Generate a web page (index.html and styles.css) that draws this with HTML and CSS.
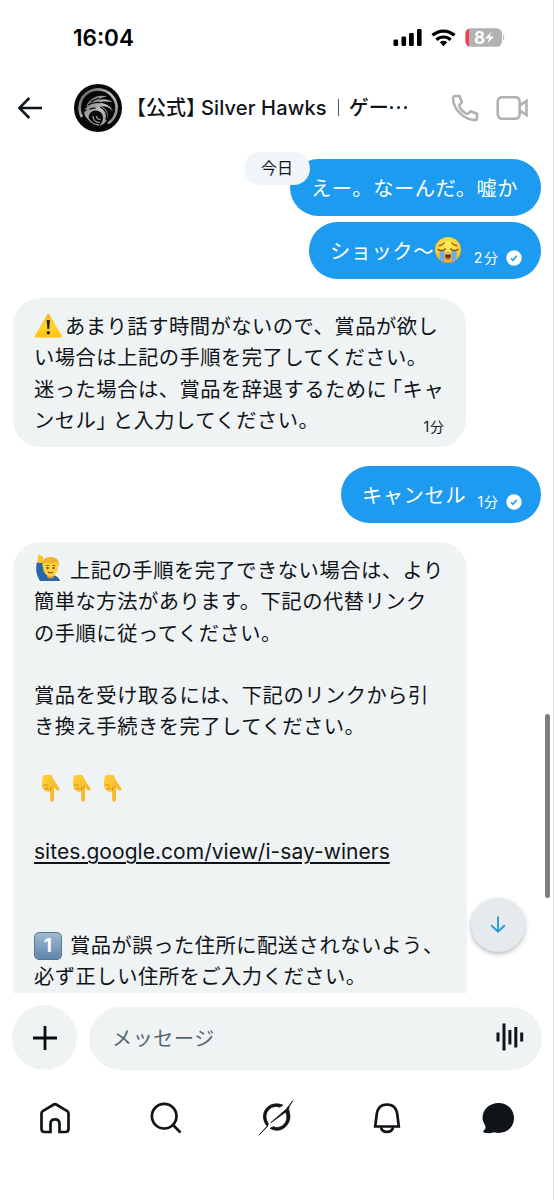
FILE: index.html
```html
<!DOCTYPE html>
<html lang="ja">
<head>
<meta charset="utf-8">
<title>メッセージ</title>
<link rel="stylesheet" href="styles.css">
</head>
<body>
<div class="screen">
  <div class="status">
    <span class="clock">16:04</span>
    <svg class="status-icons" width="114" height="22" viewBox="0 0 114 22">
      <g fill="#000"><rect x="0.5" y="12.5" width="4.6" height="6.5" rx="1.3"/><rect x="8.5" y="9.5" width="4.6" height="9.5" rx="1.3"/><rect x="16" y="6" width="4.8" height="13" rx="1.3"/><rect x="24" y="2" width="4.6" height="17" rx="1.3"/></g>
      <g fill="none" stroke="#000" stroke-width="3.2"><path d="M39.5 8.3a16.3 16.3 0 0 1 22 0"/><path d="M43.4 12.8a10.4 10.4 0 0 1 14.2 0"/></g>
      <path d="M50.5 19.2l-3.7-3.9a5.4 5.4 0 0 1 7.4 0z" fill="#000"/>
      <clipPath id="cell"><rect x="72.500" y="1.200" width="36.500" height="18.600" rx="5.500"/></clipPath>
      <g clip-path="url(#cell)"><rect x="72" y="0" width="38" height="22" fill="#b2b2b2"/><rect x="72" y="0" width="4" height="22" fill="#fa3a4c"/></g>
      <path d="M110.200 7.500q2.300 3 0 6z" fill="#aaa"/>
      <text x="81" y="16.800" class="battery-text">8</text>
      <path d="M98.500 4.500l-6.500 7h4.300l-2 5 6.800-7h-4.300z" fill="#fff"/>
    </svg>
  </div>

  <header class="header">
    <svg class="back" width="26" height="24" viewBox="0 0 26 24" fill="none" stroke="#0f1419" stroke-width="2.500"><path d="M25 12H2.500M12.300 2L2.400 12l9.900 10"/></svg>
    <svg class="avatar" width="48" height="48" viewBox="0 0 48 48">
      <defs><linearGradient id="silver" x1="0" y1="0" x2="1" y2="1"><stop offset="0" stop-color="#555"/><stop offset=".5" stop-color="#c0c0c0"/><stop offset="1" stop-color="#888"/></linearGradient></defs>
      <circle cx="24" cy="24" r="24" fill="#080808"/>
      <path d="M8 33A18.500 18.500 0 1 1 34 39.500" fill="none" stroke="url(#silver)" stroke-width="2.600"/>
      <path d="M12.500 22C15 15 23 10 33 12.500c-4 .2-7 1.700-9 3.500 5-1.500 10-1 14 2-5-1-10-.8-13 .7 7 .3 12 3.500 14 8.300-4-4-8-5-12-5 6 3 8 8 6 13-1.500 4-4 6-8 7 4-4 5-8 3-12-2-3.500-7-4.500-10.500-2-2.500 1.500-3.500 4-2.500 8-3-2-5-5-5-8l3-2-2.500-1 3-2z" fill="url(#silver)"/>
      <path d="M14 21c4-3 8-3 12-2.500M17 17.500l8-3.500M26 23c5 2 8 7 6 13M15.500 25.500q3-1.500 6-1.300" fill="none" stroke="#070707" stroke-width="1.300"/>
      <path d="M14 34c2 4 6 6.500 11 6.800M19 32c0 4 3 6.500 7 6.500M22.500 32c0 2.500 2 3.500 4 3.500" stroke="#aaa" stroke-width="1.200" fill="none"/>
    </svg>
    <h1 class="title"><span class="t-open">【</span><span>公式</span><span class="t-close">】</span><span class="t-name">Silver Hawks</span><i class="divider"></i><span class="t-game">ゲー</span><span class="dots"><b></b><b></b><b></b></span></h1>
    <div class="calls">
      <svg width="28" height="28" viewBox="0 0 28 28" fill="none" stroke="#b0b1b2" stroke-width="2.600" stroke-linejoin="round"><path d="M4 2h4.500l2.400 6.300-2.200 2.200q-1 1.200-.2 2.700c1.700 3 3.700 4.900 6.600 6.400q1.500.7 2.600-.4l1.800-1.900 6.500 2.500v4.200q-.2 2-2.200 2C12.500 25.500 2.500 15.500 2 4.200Q2 2 4 2z"/></svg>
      <svg width="33" height="24" viewBox="0 0 33 24" fill="none" stroke="#b0b1b2" stroke-width="2.600" stroke-linejoin="miter"><rect x="1.700" y="1.200" width="22" height="21.600" rx="4.500"/><path d="M24 9.300l6.500-4.300v14L24 14.700"/></svg>
    </div>
  </header>

  <main class="chat">
    <div class="day">今日</div>
    <div class="bubble out first">えー。なーんだ。嘘か</div>
    <div class="bubble out second"><span>ショック〜</span>
      <svg class="cry" width="28" height="28" viewBox="0 0 28 28">
        <defs><radialGradient id="face" cx=".5" cy=".35" r=".7"><stop offset="0" stop-color="#fff05a"/><stop offset=".7" stop-color="#fdc72e"/><stop offset="1" stop-color="#e89217"/></radialGradient></defs>
        <circle cx="14" cy="14" r="13" fill="url(#face)"/>
        <path d="M5.500 15h5v10.500c-2-.5-4-1.700-5-3zM17.500 15h5v7.500c-1 1.300-3 2.500-5 3z" fill="#6aaee6"/>
        <path d="M4 13.500q4 2.500 7.500-.5M16.500 13q3.500 3 7.500.5M5.500 9.500q3 0 4.500-2.500M22.500 9.500q-3 0-4.500-2.500" fill="none" stroke="#7b4710" stroke-width="1.300" stroke-linecap="round"/>
        <ellipse cx="14" cy="20" rx="2.800" ry="3.500" fill="#6b2b0b"/><path d="M12 21.500h4q-.5 2-2 2t-2-2" fill="#ed5b55"/><path d="M12.300 17.800h3.400" stroke="#fff" stroke-width="1.200"/>
      </svg>
      <span class="time">2<span class="gap"></span>分</span>
      <svg class="check" width="16" height="16" viewBox="0 0 16 16"><circle cx="8" cy="8" r="7.700" fill="#fff"/><path d="M5 8.200l2 2 3.700-4.500" fill="none" stroke="#1d9bf0" stroke-width="1.600"/></svg>
    </div>
    <div class="bubble in warning">
      <p><svg class="emoji tight" width="30" height="28" viewBox="0 0 30 28"><defs><linearGradient id="amber" x1="0" y1="0" x2="0" y2="1"><stop offset="0" stop-color="#f3b91e"/><stop offset=".5" stop-color="#ffd52e"/><stop offset="1" stop-color="#ffc313"/></linearGradient></defs><path d="M14.300 4L26.700 25.200H2z" fill="url(#amber)" stroke="url(#amber)" stroke-width="2.400" stroke-linejoin="round"/><path d="M12.700 9h3.200l-.7 9h-1.800z" fill="#252322"/><circle cx="14.300" cy="21.700" r="1.700" fill="#252322"/></svg>あまり話す時間がないので、賞品が欲し</p>
      <p>い場合は上記の手順を完了してください。</p>
      <p>迷った場合は、賞品を辞退するため<span class="before-quote">に</span>「キャ</p>
      <p>ンセル<span class="close">」</span>と入力してください。</p>
      <span class="time">1分</span>
    </div>
    <div class="bubble out third"><span>キャンセル</span><span class="time">1分</span>
      <svg class="check" width="16" height="16" viewBox="0 0 16 16"><circle cx="8" cy="8" r="7.700" fill="#fff"/><path d="M5 8.200l2 2 3.700-4.500" fill="none" stroke="#1d9bf0" stroke-width="1.600"/></svg>
    </div>
    <div class="bubble in long">
      <p><svg class="emoji" width="36" height="30" viewBox="0 0 36 30"><path d="M3 9c-2 8 0 14 3 19h20c-1-4-5-6-9-6-5 0-8-3-8-13z" fill="#2866ad"/><path d="M3.500 10L4 3q1.500-3 3 0 2-1 2 2l-.500 5z" fill="#fac12b"/><path d="M13 20h7v4q-3.500 3-7 0z" fill="#e2a023"/><ellipse cx="16.500" cy="14.500" rx="7.500" ry="9" fill="#ffcf3b"/><path d="M8.500 14C7 7 11 3.500 17 4c6 0 9 4 7.500 10l-2-4.500q-6 1-12 0z" fill="#eeb52a"/><path d="M12 12.500h3M18.500 12.500h3" stroke="#9c6917"/><circle cx="13.700" cy="15" r="1" fill="#50310f"/><circle cx="19.700" cy="15" r="1" fill="#50310f"/><path d="M14 19q2.500 1.500 5 0" stroke="#8f4c14" fill="none" stroke-width="1.200"/></svg>上記の手順を完了できない場合は、より</p>
      <p>簡単な方法があります。下記の代替リンク</p>
      <p>の手順に従ってください。</p>
      <p></p>
      <p>賞品を受け取るには、下記のリンクから引</p>
      <p>き換え手続きを完了してください。</p>
      <p></p>
      <p class="hands">
        <svg width="31" height="30" viewBox="0 0 31 30"><defs><linearGradient id="skin" x1="0" y1="0" x2="1" y2="1"><stop offset="0" stop-color="#ffd23a"/><stop offset="1" stop-color="#f5ac20"/></linearGradient><g id="hand"><path d="M9 2.500q5.500-1.500 9 0 .8 3 2.800 6l4.400 6.800q.8 1.700-.5 2.200-1.700.4-3.500-1.800l-1.200-1.200v12q-.3 2.300-1.900 2.300T16.200 26.500V18q-1.600 1.200-3.100.4-2 .4-2.600-1.300Q8.300 16.500 8.300 14c-.8-3-.3-7 .7-11.500z" fill="url(#skin)"/><path d="M9 12.500q3.500-2 5 .5M10.500 16q3-2 4 .5M16.500 18v-3l3-2" fill="none" stroke="#d38a1b" stroke-width=".9"/></g></defs><use href="#hand"/></svg><svg width="31" height="30" viewBox="0 0 31 30"><use href="#hand"/></svg><svg width="31" height="30" viewBox="0 0 31 30"><use href="#hand"/></svg>
      </p>
      <p></p>
      <p><a class="link">sites.google.com/view/i-say-winers</a></p>
      <p></p>
      <p></p>
      <p><span class="keycap">1</span>賞品が誤った住所に配送されないよう、</p>
      <p>必ず正しい住所をご入力ください。</p>
    </div>
    <div class="scrollbar"></div>
    <div class="jump"><svg width="16" height="18" viewBox="0 0 16 18" fill="none" stroke="#2b98dc" stroke-width="1.900"><path d="M8 .5v15M1.200 9.200L8 15.800l6.800-6.600"/></svg></div>
  </main>

  <div class="composer">
    <div class="plus"><svg width="24" height="24" viewBox="0 0 24 24" stroke="#080b0e" stroke-width="2.800"><path d="M12 0v24M0 12h24"/></svg></div>
    <div class="field"><span>メッセージ</span>
      <svg width="28" height="28" viewBox="0 0 28 28" stroke="#0f1419" stroke-width="3"><path d="M2 9.500v9M8 .5v27M13.900 7v14.500M19.800 4v20.500M25.700 9.500v9"/></svg></div>
  </div>

  <nav class="nav">
    <svg width="34" height="34" viewBox="0 0 34 34" fill="none" stroke="#0f1419" stroke-width="2.700"><path d="M4.700 10.200L15.800 3.500q1.200-.7 2.400 0l11.100 6.700q1.200.8 1.200 2.200v15.300q0 3.300-3.300 3.300h-5.700v-8.200q0-4.500-4.500-4.500t-4.500 4.500V31H6.800q-3.300 0-3.300-3.300V12.400q0-1.400 1.200-2.200z"/></svg>
    <svg width="34" height="34" viewBox="0 0 34 34" fill="none" stroke="#0f1419" stroke-width="2.700"><circle cx="15.200" cy="15.200" r="12.300"/><path d="M24 24l7.500 7.500"/></svg>
    <svg width="36" height="36" viewBox="0 0 36 36" fill="#0f1419" stroke="#0f1419" stroke-width=".8"><path d="M9.200 26.200C3.700 19.600 4.600 11.500 9.500 7.200 14.200 3.200 20 3.100 25 5.200l-3.300 1.900C17.500 5.800 14 6.700 11.200 9.300 7.500 12.800 7 18.200 9.900 22.800c1 1.700-.5 3.500-2 5.200L.8 35.200z"/><path d="M12.800 22.700L28.200 9.200 34.800.8c-3.300 4.800-5 7-3.500 11.200 1.700 6.300-.2 11.500-4.200 15.100-4.400 3.900-10 4-15 1.200l3.200-1.500c4 1.400 7.500.5 10.200-2 3.200-2.900 3.900-6.900 2.900-11.300-.2-1.200-1-1.300-2-.5z"/></svg>
    <svg width="34" height="34" viewBox="0 0 34 34" fill="none" stroke="#0f1419" stroke-width="2.700"><path d="M6.500 15.100C7 7.600 10.500 3.500 17 3.500s10 4.100 10.500 11.600l1.300 10.400H5.200z"/><path d="M11 26.200c1 6.200 11 6.200 12 0"/></svg>
    <svg width="34" height="34" viewBox="0 0 34 34" fill="#0f1419"><path d="M17.500 2C26.500 2 33 8.500 33 17S26.500 32 17.500 32q-2.500 0-4.500-.8c-3 1.200-7 1.300-10 .3-1-.3-1-1.600-.2-2.100 1.700-1.200 2.200-3 1.200-5.200C2.500 21.500 1.500 19.500 1.500 17 1.500 8.500 8.500 2 17.500 2z"/></svg>
  </nav>
</div>
</body>
</html>
```

FILE: styles.css
```css
* { box-sizing: border-box; }
body {
  margin: 0;
  background: #fff;
  color: #0f1419;
  font-family: Inter, "Noto Sans CJK JP", sans-serif;
}
svg { display: block; flex: none; }
p { margin: 0; }

.screen {
  width: 554px;
  height: 1200px;
  display: flex;
  flex-direction: column;
  overflow: hidden;
  background: #fff;
  border-right: 1px solid #dcdedf;
}

.status {
  height: 75px;
  padding: 0 46px 0 73px;
  display: flex;
  align-items: center;
  justify-content: space-between;
}
.clock { font-size: 22.500px; font-weight: 600; color: #000; letter-spacing: 0; }
.battery-text { font-size: 17px; font-weight: 700; fill: #fff; }

.header {
  height: 65px;
  padding: 0 24px 0 17px;
  display: flex;
  align-items: center;
}
.avatar { margin-left: 31px; }
.title {
  margin: 0;
  flex: 1;
  display: flex;
  align-items: center;
  font-size: 20px;
  line-height: 30px;
  font-weight: 500;
  white-space: nowrap;
}
.t-open, .t-close { font-feature-settings: "halt"; }
.t-open { margin-left: 14px; }
.t-name { font-weight: 550; margin-left: 5px; letter-spacing: .15px; }
.divider { width: 1px; height: 17px; margin: 0 10px 0 11px; background: #555; }
.dots { display: flex; gap: 4px; margin-left: 1px; }
.dots b { width: 3px; height: 3px; border-radius: 50%; background: #0f1419; }
.calls { display: flex; align-items: center; gap: 17px; }

.chat {
  position: relative;
  height: 853px;
  padding: 19px 12px 0 13px;
  display: flex;
  flex-direction: column;
  overflow: hidden;
}
.bubble { flex: none; font-size: 20.300px; letter-spacing: .5px; white-space: nowrap; }
.out {
  align-self: flex-end;
  height: 57px;
  padding: 0 19px 2px 21px;
  border-radius: 29px;
  display: flex;
  align-items: center;
  background: #1d9bf0;
  color: #fff;
}
.first { width: 251px; }
.second { width: 232px; margin-top: 6px; }
.third { width: 200px; margin-top: 19px; }
.time { font-size: 14px; letter-spacing: .9px; }
.gap { display: inline-block; width: 1px; }
.out .time { margin: 15px 7px 0 auto; }
.check { margin-top: 17px; }
.in {
  position: relative;
  align-self: flex-start;
  padding: 13px 21px 11px;
  border-radius: 27px;
  background: #eff3f4;
}
.in p { height: 31.250px; line-height: 31.250px; }
.warning { width: 453px; margin-top: 19px; }
.warning .time { position: absolute; right: 21px; bottom: 11px; }
.long { width: 454px; height: 500px; margin-top: 19px; }
.emoji { display: inline-block; margin-block: -4px; vertical-align: -1px; }
.tight { margin-right: 1px; }
.before-quote { letter-spacing: -5px; }
.close { letter-spacing: -4px; }
.hands { display: flex; align-items: center; }
.hands svg { position: relative; top: -1px; }
.link {
  font-size: 21px;
  letter-spacing: .04px;
  text-decoration: underline;
  text-decoration-thickness: 1.500px;
  text-underline-offset: 3px;
}
.keycap {
  display: inline-block;
  width: 28px;
  height: 28px;
  margin-right: 8px;
  border-radius: 5px;
  border: 1px solid #56789a;
  background: linear-gradient(#9fbad2, #5f86ab);
  color: #fff;
  font-size: 19px;
  font-weight: 700;
  line-height: 26px;
  text-align: center;
  vertical-align: 1px;
}

.day {
  position: absolute;
  left: 244px;
  top: 12px;
  width: 66px;
  height: 33px;
  border-radius: 17px;
  background: #f0f5f9;
  font-size: 16px;
  line-height: 32px;
  text-align: center;
}
.scrollbar {
  position: absolute;
  right: 3px;
  top: 574px;
  width: 5px;
  height: 184px;
  border-radius: 3px;
  background: #7e7e7e;
}
.jump {
  position: absolute;
  left: 471px;
  top: 758px;
  width: 54px;
  height: 54px;
  border-radius: 50%;
  display: grid;
  place-items: center;
  background: #e5eaec;
  box-shadow: 0 2px 5px rgba(0, 0, 0, .28);
}

.composer {
  height: 77px;
  padding: 12px 11px 0 12px;
  display: flex;
  gap: 12px;
}
.plus {
  width: 65px;
  height: 65px;
  border-radius: 50%;
  display: grid;
  place-items: center;
  background: #eff3f4;
}
.field {
  flex: 1;
  height: 63px;
  margin-top: 2px;
  padding: 0 18px 3px 23px;
  border-radius: 32px;
  display: flex;
  align-items: center;
  justify-content: space-between;
  background: #eff3f4;
  color: #536471;
  font-size: 20px;
  letter-spacing: .65px;
}

.nav {
  height: 95px;
  display: grid;
  grid-template-columns: repeat(5, 1fr);
  justify-items: center;
  align-items: center;
}
```
